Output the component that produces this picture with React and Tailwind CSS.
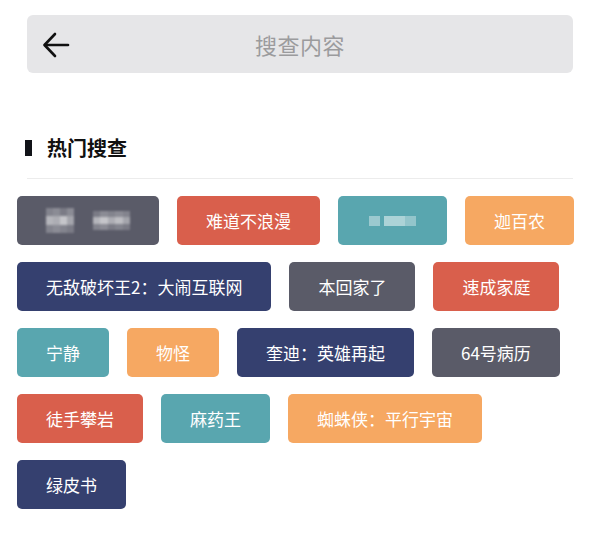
const font = { fontFamily: '"Noto Sans CJK SC", "Noto Sans", sans-serif' };

const TAGS = [
  { blur: "a", color: "bg-[#5a5b68]", w: "w-[142px]" },
  { text: "难道不浪漫", color: "bg-[#d95f4c]" },
  { blur: "b", color: "bg-[#59a6af]", w: "w-[109px]" },
  { text: "迦百农", color: "bg-[#f6a862]" },
  { text: "无敌破坏王2：大闹互联网", color: "bg-[#35406f]" },
  { text: "本回家了", color: "bg-[#5a5b68]" },
  { text: "速成家庭", color: "bg-[#d95f4c]" },
  { text: "宁静", color: "bg-[#59a6af]" },
  { text: "物怪", color: "bg-[#f6a862]" },
  { text: "奎迪：英雄再起", color: "bg-[#35406f]" },
  { text: "64号病历", color: "bg-[#5a5b68]" },
  { text: "徒手攀岩", color: "bg-[#d95f4c]" },
  { text: "麻药王", color: "bg-[#59a6af]" },
  { text: "蜘蛛侠：平行宇宙", color: "bg-[#f6a862]" },
  { text: "绿皮书", color: "bg-[#35406f]" },
];

function Mosaic({ kind }) {
  if (kind === "a") {
    return (
      <div className="flex items-center gap-[19px] blur-[0.8px]">
        <div className="grid grid-cols-4 grid-rows-3 w-[28px] h-[25px]">
          <div className="bg-white/25" /><div className="bg-white/30" /><div className="bg-white/20" /><div className="bg-white/30" />
          <div className="bg-white/55" /><div className="bg-white/50" /><div className="bg-white/65" /><div className="bg-white/45" />
          <div className="bg-white/25" /><div className="bg-white/30" /><div className="bg-white/25" /><div className="bg-white/20" />
        </div>
        <div className="grid grid-cols-5 grid-rows-3 w-[38px] h-[19px]">
          <div className="bg-white/20" /><div className="bg-white/30" /><div className="bg-white/25" /><div className="bg-white/30" /><div className="bg-white/25" />
          <div className="bg-white/55" /><div className="bg-white/65" /><div className="bg-white/50" /><div className="bg-white/60" /><div className="bg-white/45" />
          <div className="bg-white/25" /><div className="bg-white/30" /><div className="bg-white/20" /><div className="bg-white/25" /><div className="bg-white/20" />
        </div>
      </div>
    );
  }
  return (
    <div className="flex h-[10px] w-[47px] blur-[0.6px]">
      <div className="flex-1 bg-white/40" />
      <div className="w-[4px]" />
      <div className="flex-[2] bg-white/50" />
      <div className="flex-1 bg-white/35" />
    </div>
  );
}

function Tag({ tag }) {
  return (
    <div
      className={`${tag.color} ${tag.w || ""} h-[49px] px-[29px] rounded-[5px] flex items-center justify-center text-white text-[17px] whitespace-nowrap`}
    >
      {tag.blur ? <Mosaic kind={tag.blur} /> : tag.text}
    </div>
  );
}

export default function App() {
  return (
    <div className="w-[600px] h-[534px] bg-white overflow-hidden" style={font}>
      <div className="pt-[15px] px-[27px]">
        <div className="relative h-[58px] rounded-[6px] bg-[#e6e6e8] flex items-center justify-center">
          <svg
            className="absolute left-[15px] top-[17px]"
            width="28"
            height="26"
            viewBox="0 0 28 26"
            fill="none"
            stroke="#111"
            strokeWidth="2.6"
            strokeLinecap="round"
            strokeLinejoin="round"
          >
            <path d="M26 13H3" />
            <path d="M13 2L2.5 13L13 24" />
          </svg>
          <span className="text-[22px] text-[#9b9b9d] tracking-[0.5px]">搜查内容</span>
        </div>
      </div>

      <div className="mt-[65px] px-[25px] flex items-center gap-[15px]">
        <div className="w-[7px] h-[16px] bg-[#111318]" />
        <span className="text-[20px] font-bold text-[#111] leading-none">热门搜查</span>
      </div>

      <div className="mx-[27px] mt-[20px] h-px bg-[#ececec]" />

      <div className="mt-[17px] px-[17px] flex flex-wrap gap-x-[18px] gap-y-[17px]">
        {TAGS.map((t, i) => (
          <Tag key={i} tag={t} />
        ))}
      </div>
    </div>
  );
}
